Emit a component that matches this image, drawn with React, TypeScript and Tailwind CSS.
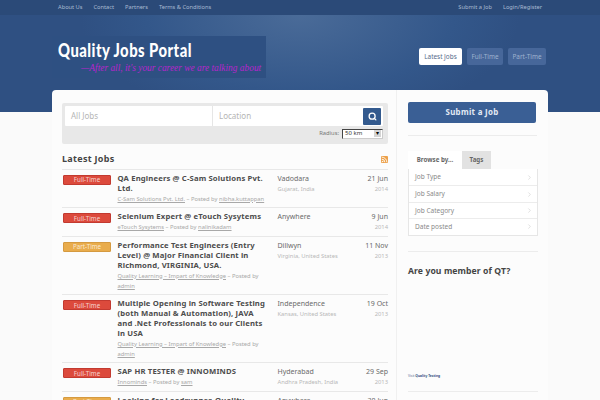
import React from "react";
import { ChevronRight, Rss, Search } from "lucide-react";

type Job = { type: "Full-Time" | "Part-Time"; title: string; company: string; by: string; city: string; region?: string; day: string; year: string };

const jobs: Job[] = [
  { type: "Full-Time", title: "QA Engineers @ C-Sam Solutions Pvt. Ltd.", company: "C-Sam Solutions Pvt. Ltd.", by: "nibha.kuttappan", city: "Vadodara", region: "Gujarat, India", day: "21 Jun", year: "2014" },
  { type: "Full-Time", title: "Selenium Expert @ eTouch Sysytems", company: "eTouch Sysytems", by: "nalinikadam", city: "Anywhere", day: "9 Jun", year: "2014" },
  { type: "Part-Time", title: "Performance Test Engineers (Entry Level) @ Major Financial Client in Richmond, VIRGINIA, USA.", company: "Quality Learning – Impart of Knowledge", by: "admin", city: "Dillwyn", region: "Virginia, United States", day: "11 Nov", year: "2013" },
  { type: "Full-Time", title: "Multiple Opening in Software Testing (both Manual & Automation), JAVA and .Net Professionals to our Clients in USA", company: "Quality Learning – Impart of Knowledge", by: "admin", city: "Independence", region: "Kansas, United States", day: "19 Oct", year: "2013" },
  { type: "Full-Time", title: "SAP HR TESTER @ INNOMINDS", company: "Innominds", by: "sam", city: "Hyderabad", region: "Andhra Pradesh, India", day: "29 Sep", year: "2013" },
  { type: "Part-Time", title: "Looking for Loadrunner, Quality", company: "", by: "", city: "Anywhere", day: "30 Jun", year: "2013" },
];

function Row({ j }: { j: Job }) {
  return (
    <div className="flex border-b border-[#e8e8e8] pt-[4px] pb-[3.6px]">
      <div className="w-[55.5px] shrink-0 pl-[1px] pt-[1px]">
        <div className={`flex h-[10px] w-[48px] items-center justify-center rounded-[1px] border text-[6.2px] text-white/75 ${j.type === "Full-Time" ? "border-[#c23a30] bg-[#dc4a3c]" : "border-[#d59a40] bg-[#e9ac4c]"}`}>{j.type}</div>
      </div>
      <div className="w-[152px] shrink-0">
        <div className="text-[7.7px] font-bold leading-[9.9px] tracking-[0.15px] text-[#4d4d4d]">{j.title}</div>
        <div className="text-[5.8px] leading-[10px] text-[#a8a8a8]"><span className="underline">{j.company}</span> – Posted by <span className="underline">{j.by}</span></div>
      </div>
      <div className="ml-[8px] w-[70px] shrink-0">
        <div className="text-[7px] leading-[9.9px] text-[#6a6a6a]">{j.city}</div>
        {j.region && <div className="text-[5.8px] leading-[10px] text-[#b8b8b8]">{j.region}</div>}
      </div>
      <div className="flex-1 text-right">
        <div className="text-[7px] leading-[9.9px] text-[#6a6a6a]">{j.day}</div>
        <div className="text-[5.8px] leading-[10px] text-[#b8b8b8]">{j.year}</div>
      </div>
    </div>
  );
}

export default function App() {
  return (
    <div className="h-[400px] w-[600px] overflow-hidden bg-[#fafafa] font-['Noto_Sans',sans-serif]">
      <div className="flex h-[15px] items-center justify-between bg-[#2b4a78] px-[58px] text-[5.7px] text-[#a9bad2]">
        <div className="flex gap-[11px]"><span>About Us</span><span>Contact</span><span>Partners</span><span>Terms &amp; Conditions</span></div>
        <div className="flex gap-[11px]"><span>Submit a Job</span><span>Login/Register</span></div>
      </div>
      <div className="flex h-[97px] items-start justify-between bg-[radial-gradient(ellipse_220px_110px_at_300px_0px,#4a6b98,#33578a_70%,#2f5082)] pl-[52px] pr-[54px] pt-[21px]">
        <div className="h-[42px] w-[214px] bg-[#2e5082] pl-[6px] pt-[3px]">
          <div className="origin-left scale-x-[0.78] whitespace-nowrap font-['Lato',sans-serif] text-[19px] font-black leading-[22px] tracking-[0.6px] text-white">Quality Jobs Portal</div>
          <div className="pl-[23px] pt-[1px] font-['Liberation_Serif',serif] text-[9.4px] italic leading-[12px] text-[#b825cc]">—After all, it's your career we are talking about</div>
        </div>
        <div className="flex gap-[5px] pt-[12px] text-[6.4px]">
          <div className="flex h-[17px] w-[43px] items-center justify-center rounded-[2px] bg-white text-[#556a8a]">Latest Jobs</div>
          <div className="flex h-[17px] w-[36px] items-center justify-center rounded-[2px] bg-[#47679a] text-[#9fb2cf]">Full-Time</div>
          <div className="flex h-[17px] w-[38px] items-center justify-center rounded-[2px] bg-[#47679a] text-[#9fb2cf]">Part-Time</div>
        </div>
      </div>
      <div className="relative mx-[52px] mt-[-22px] flex h-[400px] w-[496px] rounded-t-[4px] bg-[#fcfcfc]">
        <div className="w-[345px] shrink-0 border-r border-[#f0f0f0] pl-[10px] pr-[8px] pt-[13px]">
          <div className="h-[41px] rounded-[2px] bg-[#e8e8e8] py-[3px] pl-[3px] pr-[5px]">
            <div className="flex h-[20px] items-center rounded-[1px] bg-white pr-[2px]">
              <div className="flex h-full w-[148px] items-center border-r border-[#e6e6e6] pl-[6px] text-[8px] text-[#b5b5b5]">All Jobs</div>
              <div className="flex-1 pl-[6px] text-[8px] text-[#b5b5b5]">Location</div>
              <div className="flex h-[17px] w-[18px] items-center justify-center rounded-[1px] bg-[#335a8e]"><Search size={9} strokeWidth={3.5} color="#fff" /></div>
            </div>
            <div className="mt-[2px] flex h-[11px] items-center justify-end gap-[3px] text-[5.8px] text-[#777]">
              <span>Radius:</span>
              <div className="flex h-[10px] w-[41px] items-center justify-between border border-[#444] border-r-[#ccc] border-b-[#ccc] bg-white pl-[2px] text-[6px] text-[#333]">50 km<span className="mr-[1px] h-[7px] w-[7px] bg-[#d4d4d4] text-center text-[6px] leading-[7px] text-black">▾</span></div>
            </div>
          </div>
          <div className="mt-[7.5px] flex h-[15px] items-center justify-between">
            <div className="text-[9px] font-bold tracking-[0.3px] text-[#444]">Latest Jobs</div>
            <Rss size={7} color="#fff" strokeWidth={3} className="rounded-[1px] bg-[#eda14a]" />
          </div>
          <div className="mt-[2.5px] border-t border-[#e8e8e8]">
            {jobs.map((j) => <Row key={j.title} j={j} />)}
          </div>
        </div>
        <div className="flex-1 pl-[11px] pt-[12px]">
          <div className="flex h-[21px] w-[128px] items-center justify-center rounded-[2px] bg-[#3a5f95] text-[7.9px] font-bold tracking-[0.3px] text-[#e3eaf4]">Submit a Job</div>
          <div className="mt-[12px] h-px w-[129px] bg-[#ececec]" />
          <div className="mt-[15px] flex text-[6.2px] font-bold text-[#666]">
            <div className="flex h-[18px] w-[54px] items-center justify-center bg-white">Browse by...</div>
            <div className="flex h-[18px] w-[29px] items-center justify-center bg-[#e2e2e2]">Tags</div>
          </div>
          <div className="w-[130px] border border-t-0 border-[#e6e6e6] bg-white text-[6.5px] text-[#8a8a8a]">
            {["Job Type", "Job Salary", "Job Category", "Date posted"].map((t, i) => (
              <div key={t} className={`flex h-[16.4px] items-center justify-between pl-[6px] pr-[4px] ${i ? "border-t border-[#ececec]" : ""}`}>
                {t}<ChevronRight size={7} color="#ccc" />
              </div>
            ))}
          </div>
          <div className="mt-[15px] h-px w-[130px] bg-[#ececec]" />
          <div className="mt-[11px] text-[8.6px] font-bold leading-[16px] tracking-[0.1px] text-[#444]">Are you member of QT?</div>
          <div className="mt-[94px] text-[3.3px] leading-[6px] text-[#5a6f93]">Visit <span className="font-bold text-[#34527f]">Quality Testing</span></div>
          <div className="mt-[12px] h-px w-[130px] bg-[#ececec]" />
        </div>
      </div>
    </div>
  );
}
